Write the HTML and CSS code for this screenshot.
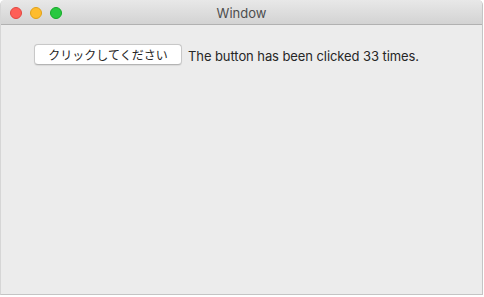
FILE: index.html
```html
<!DOCTYPE html>
<html lang="ja">
<head>
    <meta charset="UTF-8">
    <meta name="viewport" content="width=device-width, initial-scale=1.0">
    <title>Window</title>
    <link rel="stylesheet" href="styles.css">
</head>
<body>
    <div class="window">
        <div class="titlebar">
            <div class="lights">
                <span class="light red"></span>
                <span class="light yellow"></span>
                <span class="light green"></span>
            </div>
            <div class="title">Window</div>
        </div>
        <div class="content">
            <button class="push">クリックしてください</button>
            <span class="label">The button has been clicked 33 times.</span>
        </div>
    </div>
</body>
</html>
```

FILE: styles.css
```css
* {
    margin: 0;
    padding: 0;
    box-sizing: border-box;
}

body {
    width: 484px;
    height: 297px;
    background: #ffffff;
    font-family: 'Liberation Sans', 'Noto Sans CJK JP', sans-serif;
    overflow: hidden;
}

.window {
    width: 483px;
    height: 295px;
    background: #ececec;
    border: 1px solid #c4c4c4;
    border-top: none;
    border-left-color: #d6d6d6;
    border-radius: 5px 5px 0 0;
    display: flex;
    flex-direction: column;
    overflow: hidden;
}

.titlebar {
    height: 25px;
    flex-shrink: 0;
    background: linear-gradient(#e8e8e8, #d3d3d3);
    border-bottom: 1px solid #b1b1b1;
    position: relative;
    display: flex;
    align-items: center;
    justify-content: center;
}

.lights {
    position: absolute;
    left: 9px;
    top: 7px;
    display: flex;
    gap: 8px;
}

.light {
    width: 12px;
    height: 12px;
    border-radius: 50%;
}

.red {
    background: #fe5f57;
    border: 0.5px solid #e2463f;
}

.yellow {
    background: #febc2e;
    border: 0.5px solid #e1a116;
}

.green {
    background: #28c840;
    border: 0.5px solid #13a926;
}

.title {
    font-family: 'Inter', 'Liberation Sans', sans-serif;
    font-size: 13px;
    color: #4d4d4d;
    margin-top: 2px;
}

.content {
    display: flex;
    align-items: center;
    padding: 19px 0 0 33px;
    gap: 6px;
}

.push {
    width: 148px;
    height: 21px;
    background: #ffffff;
    border: 1px solid #c8c8c8;
    border-bottom-color: #b4b4b4;
    border-radius: 4px;
    font-family: 'Noto Sans CJK JP', sans-serif;
    font-size: 12px;
    color: #262626;
    box-shadow: 0 0.5px 1px rgba(0, 0, 0, 0.08);
}

.label {
    font-family: 'Inter', 'Liberation Sans', sans-serif;
    font-size: 13px;
    letter-spacing: -0.08px;
    color: #262626;
    margin-top: 3px;
}
```
